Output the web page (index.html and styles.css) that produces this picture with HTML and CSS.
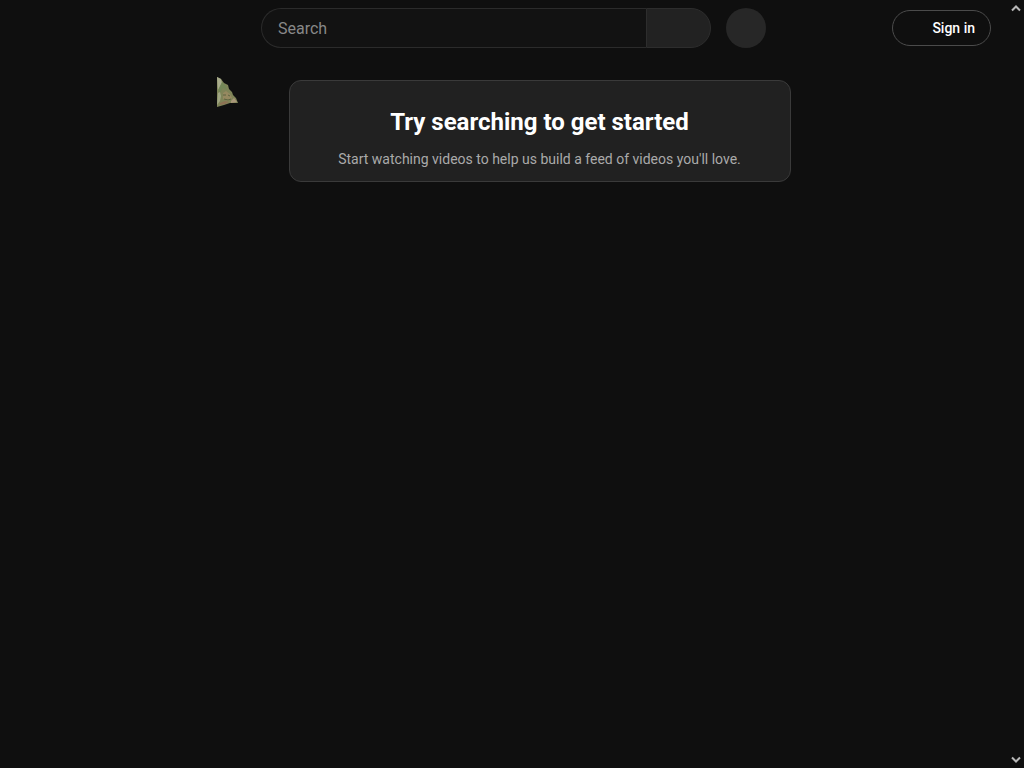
FILE: index.html
```html
<!DOCTYPE html>
<html lang="en">
<head>
<meta charset="utf-8">
<meta name="viewport" content="width=device-width, initial-scale=1">
<title>Home</title>
<link rel="stylesheet" href="styles.css">
</head>
<body>
<div class="app">
  <div class="page">
    <header class="masthead">
      <div class="masthead-start"></div>
      <div class="masthead-center">
        <form class="search" role="search">
          <input class="search-input" type="text" placeholder="Search" aria-label="Search">
          <button class="search-button" type="button" aria-label="Submit search"></button>
        </form>
        <button class="voice-button" type="button" aria-label="Search with your voice"></button>
      </div>
      <div class="masthead-end">
        <a class="sign-in" href="#">Sign in</a>
      </div>
    </header>
    <main class="content">
      <section class="nudge">
        <h1 class="nudge-title">Try searching to get started</h1>
        <p class="nudge-text">Start watching videos to help us build a feed of videos you'll love.</p>
      </section>
    </main>
  </div>
  <div class="scrollbar">
    <button class="scroll-button" type="button" aria-label="Scroll up">
      <svg width="10" height="8" viewBox="0 0 10 8"><path d="M1 6.500 5 2.500 9 6.500" fill="none" stroke="#b8b8b8" stroke-width="2"/></svg>
    </button>
    <button class="scroll-button" type="button" aria-label="Scroll down">
      <svg width="10" height="8" viewBox="0 0 10 8"><path d="M1 1.500 5 5.500 9 1.500" fill="none" stroke="#b8b8b8" stroke-width="2"/></svg>
    </button>
  </div>
  <svg class="pointer" width="24" height="32" viewBox="0 0 24 32" aria-hidden="true">
    <path d="M1 1 5 3 8 7 12 9 13 13 16 16 17 19 20 22 22 27 14 27 8 29 1 31Z" fill="#7f8458"/>
    <path d="M1 1 5 3 6 7 4 11 2 15Z" fill="#a9ac8c"/>
    <path d="M6 6 9 9 11 14 7 12 4 17 2 14Z" fill="#748757"/>
    <path d="M2 17 4 16 5 20 4 25 1 29Z" fill="#a0a582"/>
    <path d="M7 17 10 15 14 18 16 22 12 25 7 23Z" fill="#968960"/>
    <path d="M7 19h3M12 19l2 1M8 23l4 1 3-1" fill="none" stroke="#5c6340" stroke-width="1"/>
    <path d="M4 27 9 25 13 26 9 28 4 29Z" fill="#8d7254"/>
    <path d="M15 25 18 22 21 26 15 27Z" fill="#aa977a"/>
  </svg>
</div>
</body>
</html>
```

FILE: styles.css
```css
* {
  box-sizing: border-box;
}

body {
  margin: 0;
  background: #0f0f0f;
  color: #f1f1f1;
  font-family: Roboto, "Liberation Sans", sans-serif;
}

.app {
  display: flex;
  min-height: 100vh;
  position: relative;
}

.page {
  flex: 1;
  min-width: 0;
}

.masthead {
  display: flex;
  align-items: center;
  height: 56px;
  padding: 0 16px;
}

.masthead-start {
  flex: 1;
}

.masthead-center {
  display: flex;
  flex: 0 1 505px;
  gap: 15px;
  min-width: 0;
}

.search {
  display: flex;
  flex: 1;
  min-width: 0;
  height: 40px;
}

.search-input {
  flex: 1;
  min-width: 0;
  padding: 2px 16px 0;
  border: 1px solid #2b2b2b;
  border-right: 0;
  border-radius: 40px 0 0 40px;
  background: #121212;
  color: #f1f1f1;
  font: 16px/24px Roboto, "Liberation Sans", sans-serif;
}

.search-input::placeholder {
  color: #888;
  opacity: 1;
}

.search-button {
  width: 65px;
  padding: 0;
  border: 1px solid #2d2d2d;
  border-radius: 0 40px 40px 0;
  background: #222;
}

.voice-button {
  width: 40px;
  height: 40px;
  padding: 0;
  border: 0;
  border-radius: 50%;
  background: #272727;
}

.masthead-end {
  display: flex;
  justify-content: flex-end;
  flex: 0 1 225px;
}

.sign-in {
  height: 36px;
  padding: 0 15px 0 39px;
  border: 1px solid #4b4b4b;
  border-radius: 18px;
  color: #fff;
  font-size: 14px;
  font-weight: 500;
  line-height: 34px;
  text-decoration: none;
  white-space: nowrap;
}

.content {
  padding: 24px 0 24px 72px;
}

.nudge {
  max-width: 502px;
  margin: 0 auto;
  padding: 24px 16px 12px;
  border: 1px solid #3a3a3a;
  border-radius: 12px;
  background: #212121;
  text-align: center;
}

.nudge-title {
  margin: 0;
  color: #fff;
  font-size: 24px;
  font-weight: 700;
  line-height: 34px;
}

.nudge-text {
  margin: 10px 0 0;
  color: #aaa;
  font-size: 14px;
  line-height: 20px;
}

.scrollbar {
  display: flex;
  flex-direction: column;
  justify-content: space-between;
  width: 17px;
}

.scroll-button {
  display: flex;
  align-items: center;
  justify-content: center;
  width: 17px;
  height: 16px;
  padding: 0;
  border: 0;
  background: none;
}

.pointer {
  position: absolute;
  top: 76px;
  left: 216px;
  pointer-events: none;
}
```
